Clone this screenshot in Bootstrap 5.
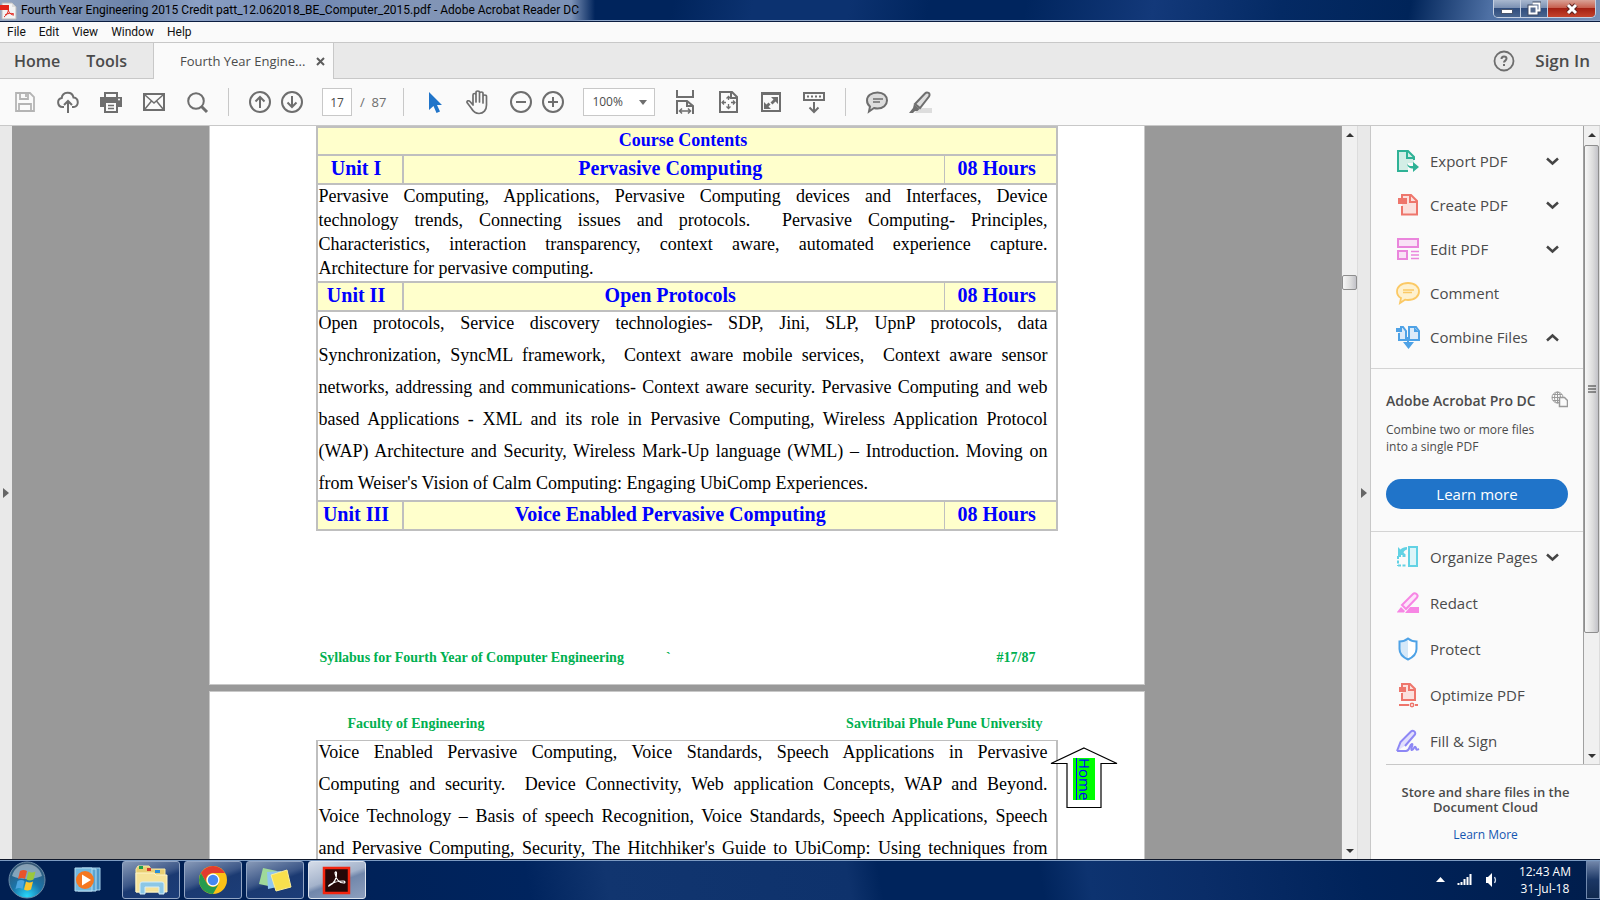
<!DOCTYPE html>
<html lang="en">
<head>
<meta charset="utf-8">
<meta name="viewport" content="width=device-width, initial-scale=1">
<title>Fourth Year Engineering 2015 Credit patt_12.062018_BE_Computer_2015.pdf - Adobe Acrobat Reader DC</title>
<link rel="stylesheet" href="https://cdn.jsdelivr.net/npm/bootstrap@5.3.0/dist/css/bootstrap.min.css">
<style>
:root{--ui:"Open Sans","Noto Sans",sans-serif;--ink:#4b4b4b;--line:#c8c8c8;--pane:#fafafa;--bar:#e9e9e9}
body{font-family:var(--ui);font-size:15px;line-height:20px;color:var(--ink);background:var(--pane)}
button{font:inherit;color:inherit;background:none;border:0;padding:0}
svg{display:block;flex:none}
/* window frame */
.titlebar{height:22px;border-bottom:1px solid #0b1d40;box-shadow:inset 0 -1px #8fa6c8;font-size:12px;color:#000;
 background:linear-gradient(100deg,#00245c 0 42%,#0c3270 47% 53%,#00255e 58% 64%,#13397a 72%,#042a64 80%,#002459 88%,#4e70a4 93%,#7791b8)}
.caption{font-family:Roboto,sans-serif;height:21px;padding:0 16px 1px 0;background:linear-gradient(90deg,#95a5c0,#8498b8 8%,#6c83a9 22%,#8ba0c4 33%,#7188b2 52%,#8295b6 70%,#7b91b6 96%,rgba(60,90,140,0));}
.winctl{height:18px;border:1px solid #c5d0e2;border-top:0;border-radius:0 0 5px 5px;overflow:hidden}
.winctl button{width:27px;background:linear-gradient(#a9b8cf,#7c91b3 45%,#304d7e 50%,#48658f);border-right:1px solid #c5d0e2}
.winctl button:last-child{width:47px;border-right:0;background:linear-gradient(#d9a296,#c7604f 45%,#a42113 50%,#c4432c)}
.menubar{height:21px;border-bottom:1px solid var(--line);font-family:Roboto,sans-serif;font-size:12px;gap:13px;padding-left:7px}
.menubar a{color:#111}
.tabs{height:36px;background:var(--bar);font-weight:600;font-size:16px}
.tabs>*{border-bottom:1px solid var(--line)}
.tabs a{color:var(--ink)}
.main-tabs{width:153px;gap:26px;padding-left:14px}
.doc-tab{width:181px;background:var(--pane);border:solid var(--line);border-width:0 1px;font-size:13px;font-weight:400;padding:0 8px 0 26px}
.account{padding-right:10px}
.signin{font-size:17px}
.toolbar{height:47px;border-bottom:1px solid var(--line);color:#6e6e6e;font-size:13px;padding-left:11px}
.tool-set{display:flex;gap:15px}
.tool{width:28px;height:28px;display:flex;align-items:center;justify-content:center}
.rule{width:1px;height:28px;background:var(--line);margin:0 17px}
.field{height:28px;border:1px solid var(--line);border-radius:0;background:#fff;color:var(--ink);font-size:12px}
.pageno{width:30px;text-align:center;padding:0}
.zoombox{width:72px;padding:0 8px;appearance:none}
.zoomwrap::after{content:"";position:absolute;right:8px;top:12px;border:solid transparent;border-width:5px 4px 0;border-top-color:#6e6e6e;pointer-events:none}
/* document */
.gutter{width:12px;background:var(--bar)}
.canvas{background:#999;overflow:hidden;min-width:0}
.sheet{max-width:936px;background:#fff;border:1px solid var(--line);padding:0 86px 0 106px;font-family:"Liberation Serif",serif;font-size:18px;color:#000}
.sheet.first{border-top:0}
.syllabus{border-collapse:collapse;table-layout:fixed}
.syllabus td,.syllabus th{border:2px solid #bfbfbf;padding:0;vertical-align:top}
.syllabus th{background:#ffffcc;color:#0000ff;text-align:center;font-size:20px;line-height:24px;height:29px;padding-right:7px}
.syllabus thead th{font-size:18px;height:28px}
.syllabus th:nth-child(2){border-right-width:1px}
.syllabus th.hrs{border-left-width:1px}
.syllabus td{padding:0 8px 0 1px}
.syllabus.resumed td{border-top-width:1px}
.para{line-height:32px;margin:-5px 0 1px}
.para.tight{line-height:24px;margin:-1px 0 1px}
.para span{display:block;white-space:pre-wrap;text-align:justify;text-align-last:justify}
.para span:last-child{text-align-last:left}
.para.cont span:last-child{text-align-last:justify}
.green{color:#00b050;font-weight:700;font-size:14px;line-height:20px}
.foot{margin-top:117px;padding:0 22px 16px 4px}
.foot .tick{margin-left:42px}
.head{padding:22px 15px 6px 32px}
.next-sheet{margin-top:6px}
.gohome{left:839px;top:55px}
.gohome a{position:absolute;left:24px;top:11px;height:42px;width:22px;writing-mode:vertical-rl;background:#00ff00;color:#0000ff;font-size:15px;line-height:20px;font-family:"Open Sans",sans-serif;text-decoration:none;display:block;overflow:hidden;box-shadow:inset 3px 0 #00ff00,inset 4px 0 #0000ff}
/* scrollbars */
.sbar{width:17px;background:#f0f0f0;border-left:1px solid #a0a0a0;border-right:1px solid #dcdcdc}
.sbar .up,.sbar .down{width:0;height:0;border:solid transparent;border-width:0 4px 4px;border-bottom-color:#333;margin:7px auto 0}
.sbar .down{border-width:4px 4px 0;border-top-color:#333;margin:auto auto 6px}
.thumb{border:1px solid #8e8e8e;border-radius:2px;background:linear-gradient(90deg,#f7f7f7,#dcdcdc 60%,#c2c2c8)}
.tri{width:0;height:0;border:solid transparent;border-width:5px 0 5px 6px;border-left-color:#666}
/* tools pane */
.pane{width:230px;border-left:1px solid var(--line);background:var(--pane)}
.entry{height:44px;padding:0 24px 0 25px;width:100%;text-align:left}
.high{padding-top:13px}
.low{padding-top:2px}
.low .entry{height:46px}
.entry svg:first-child{margin-right:10px}
.promo{border:solid #d4d4d4;border-width:1px 0;padding:22px 15px;margin-top:9px}
.promo b{font-size:14px}
.small-copy{font-size:12px;line-height:17px;margin:10px 0 24px}
.learn{height:30px;border-radius:15px;background:#2074c9;color:#fff;width:100%}
.cloud{margin-left:15px;border-top:1px solid var(--line);padding:20px 15px 0 0;font-size:13px;line-height:15px;height:96px}
.cloud a{color:#1455b0;font-size:12px}
/* taskbar */
.taskbar{height:41px;border-top:1px solid #10182a;box-shadow:inset 0 1px #7d9bc2;color:#fff;font-size:12px;line-height:17px;
 background:linear-gradient(80deg,#001f52 0 10%,#00245e 33%,#11356f 38%,#0e326c 53%,#00245c 55% 65%,#0d3370 68%,#0a2d68 75%,#00235a 85%,#001d4c)}
.player{margin:0 20px 0 24px;padding-left:4px}
.app{width:58px;height:38px;border:1px solid #93a6c5;border-radius:3px;background:linear-gradient(160deg,#8799b7,#3c5788 45%,#1b3a72 55%,#1c3d78);display:flex;align-items:center;justify-content:center}
.app.on{background:linear-gradient(160deg,#d5dce8,#a4b3cb 45%,#7187ab 55%,#8d9fbe);border-color:#dde4ee}
.tray{gap:12px}
.clock{margin:0 15px 0 8px}
.desk{width:14px;height:38px;border:1px solid #7189ae;background:linear-gradient(#6f84a8,#1b3765 50%,#10294f)}
</style>
</head>
<body class="vh-100 d-flex flex-column overflow-hidden">

<header>
 <div class="titlebar d-flex justify-content-between">
  <div class="caption d-flex align-items-center">
   <svg width="21" height="20" viewBox="0 0 21 20"><path d="M2 3h10l4 4v12H2z" fill="#f3f3f3" stroke="#bbb"/><path d="M12 3v4h4" fill="#ddd"/><path d="M0 5h9v5H0z" fill="#e2231a"/><path d="M4 17c3-2 5-6 4-8M8 9c1 4 3 6 6 6M5 15c3-2 6-2 9-1" fill="none" stroke="#e2231a"/></svg>
   <span>Fourth Year Engineering 2015 Credit patt_12.062018_BE_Computer_2015.pdf - Adobe Acrobat Reader DC</span>
  </div>
  <div class="winctl d-flex me-1">
   <button aria-label="Minimize"><svg class="mx-auto" width="14" height="16"><rect x="1.500" y="8.500" width="11" height="4" fill="#fff" stroke="#49566e"/></svg></button>
   <button aria-label="Restore"><svg class="mx-auto" width="14" height="16"><path d="M5.500 2.500h7v7h-2M2.500 5.500h7v7h-7z" fill="none" stroke="#3c4963" stroke-width="4"/><path d="M5.500 2.500h7v7h-2M2.500 5.500h7v7h-7z" fill="#54698d" stroke="#fff" stroke-width="2"/></svg></button>
   <button aria-label="Close"><svg class="mx-auto" width="14" height="16"><path d="M3 4l8 8M11 4l-8 8" stroke="#5a2320" stroke-width="5"/><path d="M3 4l8 8M11 4l-8 8" stroke="#fff" stroke-width="3"/></svg></button>
  </div>
 </div>
 <nav class="menubar d-flex align-items-center">
  <a href="#" class="text-decoration-none">File</a><a href="#" class="text-decoration-none">Edit</a><a href="#" class="text-decoration-none">View</a><a href="#" class="text-decoration-none">Window</a><a href="#" class="text-decoration-none">Help</a>
 </nav>
 <nav class="tabs d-flex">
  <div class="main-tabs d-flex align-items-center"><a href="#" class="text-decoration-none">Home</a><a href="#" class="text-decoration-none">Tools</a></div>
  <div class="doc-tab d-flex align-items-center justify-content-between"><span>Fourth Year Engine...</span>
   <button aria-label="Close tab"><svg width="9" height="9"><path d="M1 1l7 7M8 1l-7 7" stroke="#5c5c5c" stroke-width="2"/></svg></button></div>
  <div class="account flex-grow-1 d-flex align-items-center justify-content-end">
   <button aria-label="Help"><svg width="22" height="22"><circle cx="11" cy="11" r="9.500" fill="none" stroke="#6e6e6e" stroke-width="1.800"/><path d="M8.500 9c0-3.600 5-3.200 5-.4 0 2-2.500 2-2.500 4M11 14v2" fill="none" stroke="#6e6e6e" stroke-width="2"/></svg></button>
   <a href="#" class="signin text-decoration-none ms-3 ps-1">Sign In</a>
  </div>
 </nav>
 <div class="toolbar d-flex align-items-center">
  <div class="tool-set">
   <button class="tool" aria-label="Save"><svg width="22" height="22" fill="none" stroke="#b4b4b4" stroke-width="1.800"><path d="M2 2h14l4 4v14H2zM6 2v6h8V2M5 20v-7h12v7M12 3v3"/></svg></button>
   <button class="tool" aria-label="Upload"><svg width="24" height="24" fill="none" stroke="#6e6e6e" stroke-width="2"><path d="M8 17H6.500a4.500 4.500 0 0 1-.8-8.900A6 6 0 0 1 17.500 7.500a4.800 4.800 0 0 1 .3 9.500H16M12 23V11M8 15l4-4 4 4"/></svg></button>
   <button class="tool" aria-label="Print"><svg width="24" height="24"><path d="M6 7V3h12v4" fill="none" stroke="#6e6e6e" stroke-width="2"/><path d="M1 7h22v10H1z" fill="#6e6e6e"/><path d="M6 12h12v10H6z" fill="#fafafa" stroke="#6e6e6e" stroke-width="2"/><path d="M9 15.500h6M9 18.500h6" stroke="#6e6e6e" stroke-width="1.500"/><circle cx="20" cy="9.500" r="1" fill="#fff"/></svg></button>
   <button class="tool" aria-label="Email"><svg width="24" height="24" fill="none" stroke="#6e6e6e"><path d="M2 4h20v16H2z" stroke-width="2"/><path d="M3 5l9 8 9-8M3 19l6.500-8M21 19l-6.500-8" stroke-width="1.500"/></svg></button>
   <button class="tool" aria-label="Find"><svg width="24" height="24" fill="none" stroke="#6e6e6e"><circle cx="11" cy="11" r="7.800" stroke-width="2"/><path d="M16.500 16.500L22 22" stroke-width="3"/></svg></button>
  </div>
  <div class="rule"></div>
  <div class="d-flex gap-1">
   <button class="tool" aria-label="Previous page"><svg width="24" height="24" fill="none" stroke="#6e6e6e" stroke-width="2"><circle cx="12" cy="12" r="10"/><path d="M12 18V7M7.500 11.500L12 7l4.500 4.500"/></svg></button>
   <button class="tool" aria-label="Next page"><svg width="24" height="24" fill="none" stroke="#6e6e6e" stroke-width="2"><circle cx="12" cy="12" r="10"/><path d="M12 6v11M7.500 12.500L12 17l4.500-4.500"/></svg></button>
  </div>
  <input class="field pageno ms-3" value="17" aria-label="Page number"><span class="ms-1 ps-1">/&nbsp; 87</span>
  <div class="rule"></div>
  <div class="tool-set">
   <button class="tool" aria-label="Select"><svg width="24" height="24"><path d="M6 2v18l4.500-4 3 7 3.500-1.500-3-6.500h5z" fill="#2074c9"/></svg></button>
   <button class="tool" aria-label="Pan"><svg width="26" height="26" fill="none" stroke="#6e6e6e" stroke-width="1.700" stroke-linejoin="round"><path d="M8 14V6c0-2 3-2 3 0v7V3.500c0-2 3.500-2 3.500 0V13 4.500c0-2 3.500-2 3.500 0V14 7.500c0-2 3.500-2 3.500 0V16c0 5-3 8.500-7.500 8.500-3.500 0-5.500-1.500-7.500-5L2 13.500c-.5-1.800 2-2.300 3-1L8 16z"/></svg></button>
   <button class="tool" aria-label="Zoom out"><svg width="24" height="24" fill="none" stroke="#6e6e6e" stroke-width="2"><circle cx="12" cy="12" r="10"/><path d="M7 12h10"/></svg></button>
  </div>
  <button class="tool ms-1" aria-label="Zoom in"><svg width="24" height="24" fill="none" stroke="#6e6e6e" stroke-width="2"><circle cx="12" cy="12" r="10"/><path d="M7 12h10M12 7v10"/></svg></button>
  <div class="zoomwrap position-relative ms-3"><select class="field zoombox" aria-label="Zoom level"><option>100%</option></select></div>
  <div class="tool-set ms-3">
   <button class="tool" aria-label="Fit width"><svg width="24" height="26" fill="none" stroke="#6e6e6e" stroke-width="2"><path d="M4 1v7h16V1M4 25V12h10l6 5v8M14 12v5h5"/><path d="M7 22h10M9 19.500L6.500 22 9 24.500M15 19.500l2.500 2.500-2.500 2.500" stroke-width="1.500"/></svg></button>
   <button class="tool" aria-label="Fit page"><svg width="24" height="24" fill="none" stroke="#6e6e6e" stroke-width="2"><path d="M4 2h12l5 5v15H4zM15 2v6h6"/><path d="M12.500 7v3M12.500 14v4M6.500 12.500h3.500M15 12.500h4M10.500 8.500l2-2 2 2M10.500 16.500l2 2 2-2M8 10.500l-2 2 2 2M17 10.500l2 2-2 2" stroke-width="1.300"/></svg></button>
   <button class="tool" aria-label="Full screen"><svg width="24" height="24"><path d="M3 3h18v18H3z" fill="none" stroke="#6e6e6e" stroke-width="2"/><path d="M2 2h20v3H2z" fill="#6e6e6e"/><path d="M12 7h7v7l-2.500-2.500-3 3-2-2 3-3zM12 19H5v-7l2.500 2.500 2-2 2 2-2 2z" fill="#6e6e6e"/></svg></button>
   <button class="tool" aria-label="Read mode"><svg width="24" height="24" fill="none" stroke="#6e6e6e" stroke-width="2"><path d="M2 3h20v7H2z"/><path d="M5 6.500h14" stroke-dasharray="2 2"/><path d="M12 12v10M7.500 17.500L12 22l4.500-4.500"/></svg></button>
  </div>
  <div class="rule"></div>
  <div class="tool-set">
   <button class="tool" aria-label="Comment"><svg width="24" height="24"><path d="M12.500 2.500c6 0 9.500 3.500 9.500 8s-4 8-9.500 8c-1.500 0-2.500-.2-3.500-.5L4 21.500l1-5c-2-1.500-3-3.500-3-6 0-4.500 4-8 10.500-8z" fill="#ddd" stroke="#6e6e6e" stroke-width="2"/><path d="M8 9h10M8 12h7" stroke="#6e6e6e" stroke-width="1.500"/></svg></button>
   <button class="tool" aria-label="Highlight"><svg width="24" height="24"><path d="M9 18h15v5H7z" fill="#ddd"/><path d="M7 14L17 3.500c2-2 6-.5 4 3L12 18z" fill="#ddd" stroke="#6e6e6e" stroke-width="2"/><path d="M6 14l5.500 5-2 2H7l-2 2H1l4-5z" fill="#6e6e6e"/></svg></button>
  </div>
 </div>
</header>

<div class="flex-grow-1 d-flex overflow-hidden">
 <div class="gutter d-flex align-items-center justify-content-center"><span class="tri"></span></div>
 <main class="canvas flex-grow-1">
  <section class="sheet first mx-auto">
   <table class="syllabus w-100">
    <colgroup><col style="width:86px"><col><col style="width:112px"></colgroup>
    <thead><tr><th colspan="3">Course Contents</th></tr></thead>
    <tbody>
    <tr><th>Unit I</th><th>Pervasive Computing</th><th class="hrs">08 Hours</th></tr>
    <tr><td colspan="3"><p class="para tight"><span>Pervasive Computing, Applications, Pervasive Computing devices and Interfaces, Device</span><span>technology trends, Connecting issues and protocols.  Pervasive Computing- Principles,</span><span>Characteristics, interaction transparency, context aware, automated experience capture.</span><span>Architecture for pervasive computing.</span></p></td></tr>
    <tr><th>Unit II</th><th>Open Protocols</th><th class="hrs">08 Hours</th></tr>
    <tr><td colspan="3"><p class="para"><span>Open protocols, Service discovery technologies- SDP, Jini, SLP, UpnP protocols, data</span><span>Synchronization, SyncML framework,  Context aware mobile services,  Context aware sensor</span><span>networks, addressing and communications- Context aware security. Pervasive Computing and web</span><span>based Applications - XML and its role in Pervasive Computing, Wireless Application Protocol</span><span>(WAP) Architecture and Security, Wireless Mark-Up language (WML) – Introduction. Moving on</span><span>from Weiser's Vision of Calm Computing: Engaging UbiComp Experiences.</span></p></td></tr>
    <tr><th>Unit III</th><th>Voice Enabled Pervasive Computing</th><th class="hrs">08 Hours</th></tr>
    </tbody>
   </table>
   <div class="green foot d-flex"><span>Syllabus for Fourth Year of Computer Engineering</span><span class="tick">`</span><span class="ms-auto">#17/87</span></div>
  </section>
  <section class="sheet next-sheet mx-auto position-relative">
   <div class="green head d-flex justify-content-between"><span>Faculty of Engineering</span><span>Savitribai Phule Pune University</span></div>
   <table class="syllabus resumed w-100">
    <tbody><tr><td><p class="para cont"><span>Voice Enabled Pervasive Computing, Voice Standards, Speech Applications in Pervasive</span><span>Computing and security.  Device Connectivity, Web application Concepts, WAP and Beyond.</span><span>Voice Technology – Basis of speech Recognition, Voice Standards, Speech Applications, Speech</span><span>and Pervasive Computing, Security, The Hitchhiker's Guide to UbiComp: Using techniques from</span></p></td></tr></tbody>
   </table>
   <div class="gohome position-absolute">
    <svg width="70" height="62"><path d="M35 1L68 16.500H52V60.500H18V16.500H2z" fill="#fff" stroke="#000" stroke-width="1.200"/></svg>
    <a href="#">Home</a>
   </div>
  </section>
 </main>
 <div class="sbar d-flex flex-column"><i class="up"></i><div class="thumb" style="height:15px;margin-top:138px"></div><i class="down"></i></div>
 <div class="gutter d-flex align-items-center justify-content-center"><span class="tri"></span></div>
 <aside class="pane d-flex flex-column">
  <div class="flex-grow-1 d-flex overflow-hidden">
   <div class="flex-grow-1">
    <div class="high">
     <button class="entry d-flex align-items-center"><svg width="24" height="24"><path d="M2 2h10l6 6v6h-6v7H2z" fill="#d3eee6"/><path d="M12 22H2V2h10l6 6v3M11 2v7h7" fill="none" stroke="#2fb296" stroke-width="2"/><path d="M11 15c2 2.500 4 2 6 2v-4l6 5-6 5v-3.500c-3 0-5-1-6-4.500z" fill="#2fb296"/></svg>Export PDF<svg class="ms-auto" width="13" height="9"><path d="M1 1.500l5.500 5L12 1.500" fill="none" stroke="#444" stroke-width="2.500"/></svg></button>
     <button class="entry d-flex align-items-center"><svg width="24" height="24"><path d="M6 2h9l6 6v13H6z" fill="#fbe0dd"/><path d="M6 5V2h9l6 6v13.500H6V13M14 2v7h7" fill="none" stroke="#ee766c" stroke-width="2"/><path d="M2 5h9v6H2z" fill="#ee766c"/></svg>Create PDF<svg class="ms-auto" width="13" height="9"><path d="M1 1.500l5.500 5L12 1.500" fill="none" stroke="#444" stroke-width="2.500"/></svg></button>
     <button class="entry d-flex align-items-center"><svg width="24" height="24"><path d="M2 2h20v8H2zM2 14h9v8H2z" fill="#f9e2f6" stroke="#ea85dc" stroke-width="2"/><path d="M15 14.500h8M15 18h8M15 21.500h8" stroke="#ea85dc" stroke-width="1.300"/></svg>Edit PDF<svg class="ms-auto" width="13" height="9"><path d="M1 1.500l5.500 5L12 1.500" fill="none" stroke="#444" stroke-width="2.500"/></svg></button>
     <button class="entry d-flex align-items-center"><svg width="24" height="24"><path d="M12 2c7 0 11 4 11 8.500S19 19 12 19c-1 0-2 0-3-.3L4 22l1-5c-2.500-1.300-4-3.500-4-6.500C1 6 5 2 12 2z" fill="#fef1cf" stroke="#fbc965" stroke-width="1.800"/><path d="M7 9h11M7 11.500h9" stroke="#fbc965" stroke-width="1.300"/></svg>Comment</button>
     <button class="entry d-flex align-items-center"><svg width="24" height="24"><path d="M3 8v7h7V6L7 2H4M13 2h7l3 4v9H13z" fill="#dcebf9" stroke="#4ea2e6" stroke-width="2"/><path d="M0 3h6v4H0zM11 12h2v5h5l-5.500 7L7 17h4zM18 2v5h5" fill="#4ea2e6"/></svg>Combine Files<svg class="ms-auto" width="13" height="9"><path d="M1 7.500l5.500-5L12 7.500" fill="none" stroke="#444" stroke-width="2.500"/></svg></button>
    </div>
    <div class="promo">
     <div class="d-flex justify-content-between"><b class="fw-semibold">Adobe Acrobat Pro DC</b><svg width="17" height="17" fill="none" stroke="#999"><circle cx="6.500" cy="6.500" r="5.500"/><path d="M1 6.500h11M6.500 1v11M2 3.500h9M2 9.500h6"/><ellipse cx="6.500" cy="6.500" rx="3" ry="5.500"/><path d="M8.500 6.500h5l3 3v6h-8z" fill="#fafafa" stroke-width="1.500"/></svg></div>
     <p class="small-copy">Combine two or more files<br>into a single PDF</p>
     <button class="learn">Learn more</button>
    </div>
    <div class="low">
     <button class="entry d-flex align-items-center"><svg width="24" height="24"><path d="M13 2h8v19h-8z" fill="#dcf5f9" stroke="#62d2e4" stroke-width="2"/><path d="M2 11h9M2 20.500h9M2 11v10" fill="none" stroke="#62d2e4" stroke-width="2" stroke-dasharray="3 1.500"/><path d="M2 2v8h8L7.500 7.500C8 6 9 5 11 4.500V2C8 2 6 3 4.500 4.500z" fill="#62d2e4"/></svg>Organize Pages<svg class="ms-auto" width="13" height="9"><path d="M1 1.500l5.500 5L12 1.500" fill="none" stroke="#444" stroke-width="2.500"/></svg></button>
     <button class="entry d-flex align-items-center"><svg width="24" height="24"><path d="M6 14L17 3c2-2 6 1 4 3.500L10 18z" fill="#fde4fa" stroke="#f786e4" stroke-width="2"/><path d="M1 21l4-5 4 4-1 1.500H1zM14 16h9v6H9z" fill="#f786e4"/></svg>Redact</button>
     <button class="entry d-flex align-items-center"><svg width="24" height="24"><path d="M12 1.500C9 4 6 4.500 3.500 4.500V12c0 5 4 8.500 8.500 10.500 4.500-2 8.500-5.500 8.500-10.500V4.500C18 4.500 15 4 12 1.500z" fill="#fff"/><path d="M12 2C9 4 6 4.500 3.500 4.500V12c0 5 4 8.500 8.500 10.500z" fill="#d5e8f8"/><path d="M12 1.500C9 4 6 4.500 3.500 4.500V12c0 5 4 8.500 8.500 10.500 4.500-2 8.500-5.500 8.500-10.500V4.500C18 4.500 15 4 12 1.500z" fill="none" stroke="#4ea2e6" stroke-width="2"/></svg>Protect</button>
     <button class="entry d-flex align-items-center"><svg width="24" height="26"><path d="M6 2h8l5 5v11H6z" fill="#fbe0dd"/><path d="M6 5V2h8l5 5v11H6v-7M13 2v6h6" fill="none" stroke="#ee766c" stroke-width="2"/><path d="M3 5h7v5H3z" fill="#ee766c"/><path d="M3 23h10M19 23h3" stroke="#ee766c" stroke-width="2"/><circle cx="16" cy="23" r="1.700" fill="none" stroke="#ee766c" stroke-width="1.500"/></svg>Optimize PDF</button>
     <button class="entry d-flex align-items-center"><svg width="24" height="24"><path d="M2 22c0-4 1-7 3-9L15 2.500c2-2 5 .5 4 3L8 17.500c-1 1-3 1-4 3" fill="#e2dffc"/><path d="M1 22l3.500-9L15 2.500c2-2 5 .5 4 3L9 17M1 22h9c4 0 3-6 6-7 1.500 0-2 6 0 6s2-4 3.500-3-1 4 3.500 2" fill="none" stroke="#8d87f5" stroke-width="2"/></svg>Fill &amp; Sign</button>
    </div>
   </div>
   <div class="sbar d-flex flex-column"><i class="up"></i><div class="thumb d-flex align-items-center justify-content-center" style="height:488px;margin-top:8px"><svg width="8" height="9"><path d="M0 1h8M0 4h8M0 7h8" stroke="#333"/></svg></div><i class="down"></i></div>
  </div>
  <div class="cloud text-center"><b class="fw-semibold">Store and share files in the<br>Document Cloud</b><div class="mt-2 pt-1"><a href="#" class="text-decoration-none">Learn More</a></div></div>
 </aside>
</div>

<footer class="taskbar d-flex align-items-center">
 <button class="ms-2" aria-label="Start"><svg width="38" height="38" viewBox="0 0 38 38"><defs><radialGradient id="orb" cx=".5" cy=".95" r=".95"><stop offset="0" stop-color="#27d8fb"/><stop offset=".45" stop-color="#1b74a9"/><stop offset="1" stop-color="#36536f"/></radialGradient></defs><circle cx="19" cy="19" r="18" fill="url(#orb)" stroke="#6d8ba6"/><path d="M4 15C8-1 30-1 34 15c-9 4-22 4-30 0z" fill="#dbe6ee" opacity=".5"/><path d="M12 10c3-1.500 5-1 7 0l-2 8c-2-1-4-1.500-7 0z" fill="#e8532a"/><path d="M20.500 10.500c2 1 4 1.500 7 0l-2 8c-3 1.500-5 1-7 0z" fill="#9ac73c"/><path d="M9.500 20c3-1.500 5-1 7 0l-2 8c-2-1-4-1.500-7 0z" fill="#4ba5e0"/><path d="M18 20.500c2 1 4 1.500 7 0l-2 8c-3 1.500-5 1-7 0z" fill="#fdc62c"/></svg></button>
 <button class="player" aria-label="Media Player"><svg width="28" height="28"><path d="M8 2h18v22H8z" fill="#4f97c7" stroke="#a8d3ec"/><path d="M4 3h18v22H4z" fill="#5ba6d3" stroke="#b7dcf0"/><path d="M1 2h17v23H1z" fill="#73b8de" stroke="#b7dcf0"/><circle cx="11" cy="14" r="9" fill="#f47721"/><path d="M8 8.500l9 5.500-9 5.500z" fill="#fff"/></svg></button>
 <div class="d-flex gap-1">
  <button class="app" aria-label="Explorer"><svg width="34" height="32"><path d="M2 5l2-3h11l2 3h14v23H2z" fill="#e9cf73" stroke="#f7e9a8"/><path d="M5 2h4v3H5z" fill="#1aa04a"/><path d="M13 4h4v3h-4z" fill="#d3392b"/><path d="M21 6h5v3h-5z" fill="#2b8fd6"/><path d="M2 9h18l2 2h11v17H2z" fill="#f6e39a" stroke="#fdf4c9"/><path d="M6 30V20q0-2 2-2h20q2 0 2 2v10h-5v-7H11v7z" fill="#8cc7e6" stroke="#d4edf8"/></svg></button>
  <button class="app" aria-label="Chrome"><svg width="30" height="30" viewBox="-15 -15 30 30"><circle r="14" fill="#fbc116"/><path d="M-12.100-7A14 14 0 0 1 12.100-7H0A7 7 0 0 0-6 3.500z" fill="#e33b2e"/><path d="M-12.100-7A14 14 0 0 0 0 14L6 3.500A7 7 0 0 1-6 3.500z" fill="#279b4e"/><circle r="6.500" fill="#fff"/><circle r="5.200" fill="#4688f1"/></svg></button>
  <button class="app" aria-label="Sticky Notes"><svg width="34" height="28"><path d="M5 2l14 3-4 16L1 18z" fill="#9fd99a"/><path d="M9 6l14-1 1 15-14 3z" fill="#8fc6f0"/><path d="M13 9l16-5 4 17-15 4z" fill="#f8e04d" stroke="#fbee98"/></svg></button>
  <button class="app on" aria-label="Acrobat Reader"><svg width="30" height="29"><path d="M2 2h25v25H2z" fill="#250808" stroke="#f2240f" stroke-width="2.500"/><path d="M7 20c5-2 8-8 7.500-13-.3-2-2-1-1.300 1 1 5 4 9 8.500 9 2 0 1.500-2-.5-2-5 0-10 1.500-13 3.500-1.500 1-2 2-1.200 1.500z" fill="none" stroke="#fff" stroke-width="1.200"/></svg></button>
 </div>
 <div class="tray ms-auto d-flex align-items-center">
  <svg width="9" height="6"><path d="M0 5l4.500-5L9 5z" fill="#fff"/></svg>
  <svg width="16" height="12"><path d="M1.500 9v2M4.500 8v3M7.500 5v6M10.500 3v8M13.500 0v11" stroke="#fff" stroke-width="2"/></svg>
  <svg width="14" height="14"><path d="M1 4h2l4-4v14l-4-4H1z" fill="#fff"/><path d="M9.500 4q2 3 0 6" fill="none" stroke="#cdd8e8" stroke-width="1.300"/></svg>
  <div class="clock text-center">12:43 AM<br>31-Jul-18</div>
 </div>
 <button class="desk" aria-label="Show desktop"></button>
</footer>
<script src="https://cdn.jsdelivr.net/npm/bootstrap@5.3.0/dist/js/bootstrap.bundle.min.js"></script>
</body>
</html>
